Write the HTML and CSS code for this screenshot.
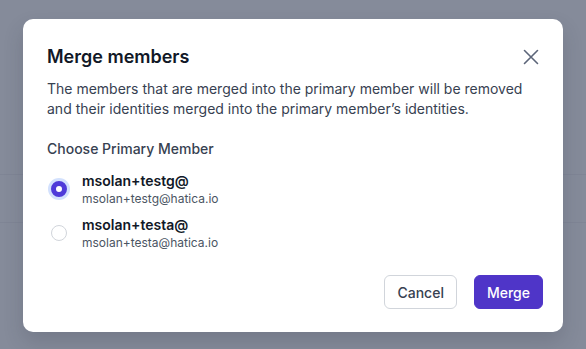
FILE: index.html
```html
<!DOCTYPE html>
<html lang="en">
<head>
	<meta charset="UTF-8">
	<meta name="viewport" content="width=device-width, initial-scale=1.0">
	<title>Merge members</title>
	<link rel="stylesheet" href="styles.css">
</head>
<body>
	<div class="backdrop">
		<div class="bg-row"></div>
		<div class="bg-row"></div>
	</div>
	<div class="modal">
		<div class="modal-head">
			<h3>Merge members</h3>
			<button class="close" aria-label="Close">
				<svg width="16" height="16" viewBox="0 0 16 16" fill="none" stroke="currentColor" stroke-width="1.6" stroke-linecap="round">
					<path d="M1.5 1.5L14.5 14.5M14.5 1.5L1.5 14.5"/>
				</svg>
			</button>
		</div>
		<p class="desc">The members that are merged into the primary member will be removed and their identities merged into the primary member’s identities.</p>
		<div class="label">Choose Primary Member</div>
		<div class="options">
			<label class="option">
				<span class="radio checked"></span>
				<span class="who">
					<span class="name">msolan+testg@</span>
					<span class="email">msolan+testg@hatica.io</span>
				</span>
			</label>
			<label class="option">
				<span class="radio"></span>
				<span class="who">
					<span class="name">msolan+testa@</span>
					<span class="email">msolan+testa@hatica.io</span>
				</span>
			</label>
		</div>
		<div class="actions">
			<button class="btn cancel">Cancel</button>
			<button class="btn primary">Merge</button>
		</div>
	</div>
</body>
</html>
```

FILE: styles.css
```css
html, body {
	margin: 0;
	padding: 0;
	font-family: Inter, "Noto Sans", sans-serif;
}

body {
	background: #858b9a;
	height: 349px;
	overflow: hidden;
	position: relative;
}

.backdrop {
	padding-top: 174px;
}
.bg-row {
	height: 47px;
	border-top: 1px solid #7f8595;
}

.modal {
	position: absolute;
	left: 23px;
	top: 19px;
	width: 540px;
	box-sizing: border-box;
	padding: 24px 24px 23px;
	background: #fff;
	border-radius: 10px;
	box-shadow: 0 10px 20px rgba(40, 45, 60, 0.18);
}

.modal-head {
	display: flex;
	justify-content: space-between;
	align-items: center;
}
.modal-head h3 {
	margin: 0;
	font-size: 18px;
	line-height: 28px;
	font-weight: 600;
	color: #111827;
}
.close {
	border: 0;
	background: none;
	padding: 0;
	color: #5c6579;
	display: flex;
}

.desc {
	margin: 8px 0 0;
	font-size: 14px;
	line-height: 20px;
	color: #374151;
}

.label {
	margin-top: 20px;
	font-size: 14px;
	line-height: 20px;
	font-weight: 500;
	color: #374151;
}

.options {
	margin-top: 12px;
	display: flex;
	flex-direction: column;
	gap: 8px;
}
.option {
	display: flex;
	align-items: center;
	gap: 15px;
	padding-left: 4px;
}
.radio {
	width: 16px;
	height: 16px;
	box-sizing: border-box;
	border-radius: 50%;
	border: 1px solid #d1d5db;
	background: #fff;
}
.radio.checked {
	border: 5px solid #4f3bd9;
	box-shadow: 0 0 0 3px #d3e1fd;
}
.who {
	display: flex;
	flex-direction: column;
}
.name {
	font-size: 14px;
	line-height: 20px;
	font-weight: 600;
	color: #111827;
}
.email {
	font-size: 12px;
	line-height: 16px;
	color: #4b5563;
}

.actions {
	margin-top: 24px;
	margin-right: -4px;
	display: flex;
	justify-content: flex-end;
	gap: 17px;
}
.btn {
	font-family: inherit;
	font-size: 14px;
	font-weight: 500;
	height: 34px;
	border-radius: 6px;
	padding: 0 12px;
}
.cancel {
	background: #fff;
	border: 1px solid #d1d5db;
	color: #374151;
}
.primary {
	background: #4f35c8;
	border: 1px solid #4f35c8;
	color: #fff;
}
```
